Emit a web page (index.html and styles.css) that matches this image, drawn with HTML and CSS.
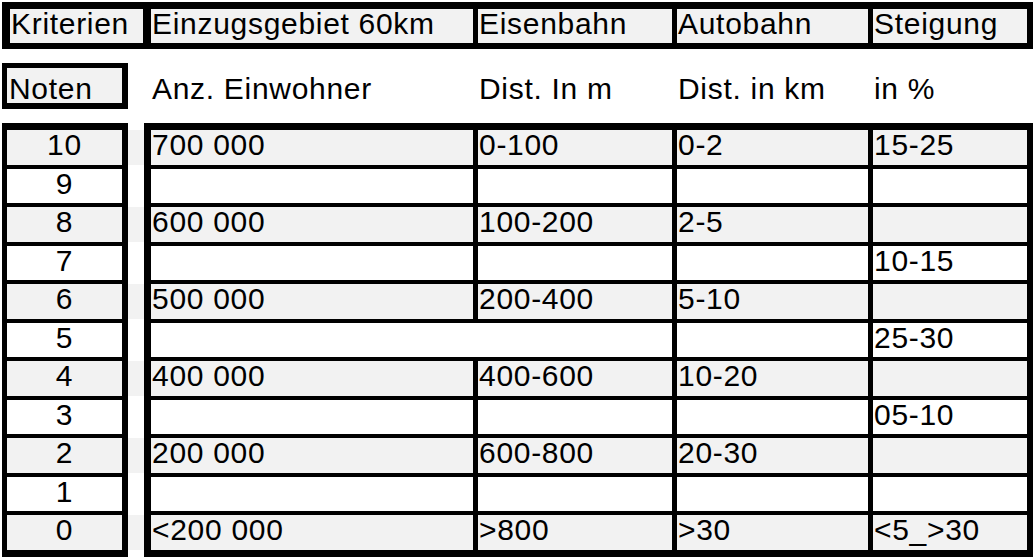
FILE: index.html
```html
<!DOCTYPE html>
<html lang="de">
<head>
<meta charset="utf-8">
<title>Kriterien</title>
<link rel="stylesheet" href="styles.css">
</head>
<body>
<div class="page">
  <div class="header">
    <div class="hcell first">Kriterien</div>
    <div class="hcell">Einzugsgebiet 60km</div>
    <div class="hcell">Eisenbahn</div>
    <div class="hcell">Autobahn</div>
    <div class="hcell">Steigung</div>
  </div>

  <div class="units">
    <div class="noten">Noten</div>
    <div class="labels">
      <div class="label">Anz. Einwohner</div>
      <div class="label">Dist. In m</div>
      <div class="label">Dist. in km</div>
      <div class="label">in %</div>
    </div>
  </div>

  <div class="body">
    <div class="scores">
      <div class="score g">10</div>
      <div class="score">9</div>
      <div class="score g">8</div>
      <div class="score">7</div>
      <div class="score g">6</div>
      <div class="score">5</div>
      <div class="score g">4</div>
      <div class="score">3</div>
      <div class="score g">2</div>
      <div class="score">1</div>
      <div class="score g">0</div>
    </div>
    <div class="spacer">
      <div class="stripe g"></div><div class="stripe"></div>
      <div class="stripe g"></div><div class="stripe"></div>
      <div class="stripe g"></div><div class="stripe"></div>
      <div class="stripe g"></div><div class="stripe"></div>
      <div class="stripe g"></div><div class="stripe"></div>
      <div class="stripe g"></div>
    </div>
    <div class="grid">
      <div class="c g">700 000</div><div class="c g">0-100</div><div class="c g">0-2</div><div class="c g">15-25</div>
      <div class="c"></div><div class="c"></div><div class="c"></div><div class="c"></div>
      <div class="c g">600 000</div><div class="c g">100-200</div><div class="c g">2-5</div><div class="c g"></div>
      <div class="c"></div><div class="c"></div><div class="c"></div><div class="c">10-15</div>
      <div class="c g">500 000</div><div class="c g">200-400</div><div class="c g">5-10</div><div class="c g"></div>
      <div class="c span2"></div><div class="c"></div><div class="c">25-30</div>
      <div class="c g">400 000</div><div class="c g">400-600</div><div class="c g">10-20</div><div class="c g"></div>
      <div class="c"></div><div class="c"></div><div class="c"></div><div class="c">05-10</div>
      <div class="c g">200 000</div><div class="c g">600-800</div><div class="c g">20-30</div><div class="c g"></div>
      <div class="c"></div><div class="c"></div><div class="c"></div><div class="c"></div>
      <div class="c g">&lt;200 000</div><div class="c g">&gt;800</div><div class="c g">&gt;30</div><div class="c g">&lt;5_&gt;30</div>
    </div>
  </div>
</div>
</body>
</html>
```

FILE: styles.css
```css
html, body {
  margin: 0;
  padding: 0;
  background: #ffffff;
}

body {
  font-family: "Liberation Sans", Arial, sans-serif;
  font-size: 30px;
  letter-spacing: 0.7px;
  color: #000000;
}

.page {
  display: flex;
  flex-direction: column;
  gap: 14px;
  padding: 2px 0 0 2px;
  width: 1031px;
}

/* header row */
.header {
  display: grid;
  grid-template-columns: 136px 322px 194px 191px 154px;
  column-gap: 5px;
  background: #000000;
  padding: 7px 6px 6px 8px;
}

.hcell {
  background: #f2f2f2;
  height: 34px;
  line-height: 29px;
  padding-left: 1px;
  white-space: nowrap;
}

.hcell.first {
  margin-right: 3px;
}

/* units row */
.units {
  display: flex;
  height: 46px;
}

.noten {
  background: #f2f2f2;
  border-style: solid;
  border-color: #000000;
  border-width: 5px 6px 6px 5px;
  padding: 6px 0 0 2px;
  box-sizing: border-box;
  width: 126px;
  line-height: 29px;
}

.labels {
  display: grid;
  grid-template-columns: 322px 194px 191px 154px;
  column-gap: 5px;
  margin-left: 23px;
  padding-top: 11px;
  line-height: 29px;
}

.label {
  padding-left: 1px;
  white-space: nowrap;
}

/* body table */
.body {
  display: flex;
  height: 434px;
}

.scores {
  width: 126px;
  box-sizing: border-box;
  background: #000000;
  padding: 7px 6px 7px 5px;
  display: grid;
  grid-template-rows: repeat(11, 1fr);
  row-gap: 4px;
}

.score {
  background: #ffffff;
  text-align: center;
  line-height: 29px;
}

.spacer {
  width: 16px;
  padding: 7px 0;
  box-sizing: border-box;
  display: grid;
  grid-template-rows: repeat(11, 1fr);
  row-gap: 4px;
}

.stripe {
  background: #ffffff;
}

.grid {
  width: 889px;
  box-sizing: border-box;
  background: #000000;
  padding: 7px 6px 7px 7px;
  display: grid;
  grid-template-columns: 322px 194px 191px 154px;
  grid-template-rows: repeat(11, 1fr);
  column-gap: 5px;
  row-gap: 4px;
}

.c {
  background: #ffffff;
  padding-left: 1px;
  line-height: 29px;
  white-space: nowrap;
}

.span2 {
  grid-column: span 2;
}

.g {
  background: #f2f2f2;
}
```
